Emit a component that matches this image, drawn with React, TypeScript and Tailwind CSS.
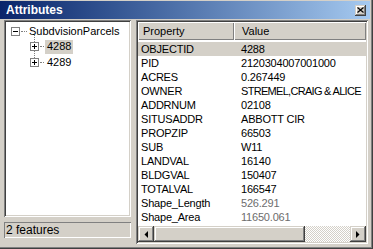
const raised =
  "shadow-[inset_-1px_-1px_0_#404040,inset_1px_1px_0_#d4d0c8,inset_-2px_-2px_0_#808080,inset_2px_2px_0_#ffffff]";
const sunken =
  "shadow-[inset_1px_1px_0_#808080,inset_-1px_-1px_0_#ffffff,inset_2px_2px_0_#404040,inset_-2px_-2px_0_#d4d0c8]";

const rows: { name: string; value: string; dim?: boolean; tight?: boolean }[] = [
  { name: "OBJECTID", value: "4288" },
  { name: "PID", value: "2120304007001000" },
  { name: "ACRES", value: "0.267449" },
  { name: "OWNER", value: "STREMEL,CRAIG & ALICE", tight: true },
  { name: "ADDRNUM", value: "02108" },
  { name: "SITUSADDR", value: "ABBOTT CIR" },
  { name: "PROPZIP", value: "66503" },
  { name: "SUB", value: "W11" },
  { name: "LANDVAL", value: "16140" },
  { name: "BLDGVAL", value: "150407" },
  { name: "TOTALVAL", value: "166547" },
  { name: "Shape_Length", value: "526.291", dim: true },
  { name: "Shape_Area", value: "11650.061", dim: true },
];

function ExpBox({ open }: { open?: boolean }) {
  return (
    <svg width="9" height="9" viewBox="0 0 9 9" className="shrink-0 relative">
      <rect x="0.5" y="0.5" width="8" height="8" fill="#fff" stroke="#808080" />
      <path d="M2 4.5h5" stroke="#000" />
      {!open && <path d="M4.5 2v5" stroke="#000" />}
    </svg>
  );
}

function Arrow({ dir }: { dir: "left" | "right" }) {
  return (
    <svg width="4" height="7" viewBox="0 0 4 7">
      {dir === "left" ? <path d="M4 0v7L0.5 3.5z" fill="#000" /> : <path d="M0 0v7l3.5-3.5z" fill="#000" />}
    </svg>
  );
}

export default function App() {
  return (
    <div
      className="w-[373px] h-[249px] bg-[#d4d0c8] flex flex-col pt-[1px] shadow-[inset_-1px_-1px_0_#404040,inset_-2px_-2px_0_#808080] text-[11px] text-black"
      style={{ fontFamily: '"Liberation Sans", Arial, sans-serif' }}
    >
      {/* title bar */}
      <div className="h-[18px] mr-[3px] flex items-center justify-between bg-gradient-to-r from-[#0a246a] to-[#a6caf0] pl-[6px] pr-[4px]">
        <span className="text-white font-bold text-[12px] leading-none">Attributes</span>
        <button className={`w-[11px] h-[11px] bg-[#d4d0c8] flex items-center justify-center ${raised}`}>
          <svg width="7" height="6" viewBox="0 0 7 6">
            <path d="M0.5 0.5l6 5M6.5 0.5l-6 5" stroke="#000" strokeWidth="1.2" />
          </svg>
        </button>
      </div>

      <div className="flex gap-[5px] pt-[1px] pl-[4px]">
        {/* left column */}
        <div className="w-[127px] flex flex-col gap-[5px]">
          <div className={`h-[197px] bg-white p-[2px] ${sunken}`}>
            <div className="relative pt-[1px] leading-none">
              <span className="absolute left-[28px] top-[11px] h-[25px] border-l border-dotted border-[#808080]" />
              <div className="flex items-center h-[16px] pl-[5px]">
                <ExpBox open />
                <span className="w-[6px] ml-[1px] border-t border-dotted border-[#808080]" />
                <span className="ml-[1px] px-[1px]">SubdvisionParcels</span>
              </div>
              <div className="flex items-center h-[15px] pl-[24px]">
                <ExpBox />
                <span className="w-[4px] ml-[1px] border-t border-dotted border-[#808080]" />
                <span className="ml-[1px] px-[2px] h-[14px] flex items-center bg-[#d4d0c8]">4288</span>
              </div>
              <div className="flex items-center h-[17px] pl-[24px]">
                <ExpBox />
                <span className="w-[4px] ml-[1px] border-t border-dotted border-[#808080]" />
                <span className="ml-[1px] px-[2px]">4289</span>
              </div>
            </div>
          </div>
          <div className="h-[16px] flex items-center pl-[2px] shadow-[inset_1px_1px_0_#808080,inset_-1px_-1px_0_#ffffff] text-[12px]">
            2 features
          </div>
        </div>

        {/* right panel */}
        <div className={`w-[232px] h-[224px] p-[2px] flex flex-col bg-white ${sunken}`}>
          <div className="h-[18px] flex bg-[#d4d0c8] shrink-0">
            <div className="w-[96px] flex items-center pl-[5px] shadow-[inset_1px_1px_0_#ffffff,inset_-1px_-1px_0_#808080]">
              Property
            </div>
            <div className="flex-1 flex items-center pl-[8px] shadow-[inset_1px_1px_0_#ffffff,inset_-1px_-1px_0_#808080]">
              Value
            </div>
          </div>
          <div className="flex-1 pt-[2px] overflow-hidden">
            {rows.map((r, i) => (
              <div
                key={r.name}
                className={`h-[14px] flex items-center leading-none whitespace-nowrap tracking-[-0.2px] ${i === 0 ? "bg-[#d4d0c8]" : ""}`}
              >
                <span className="w-[96px] shrink-0 pl-[3px]">{r.name}</span>
                <span
                  className={`pl-[7px] ${r.dim ? "text-[#6d6d6d]" : ""} ${r.tight ? "tracking-[-0.7px]" : ""}`}
                >
                  {r.value}
                </span>
              </div>
            ))}
          </div>
          <div className="h-[16px] flex shrink-0">
            <div className={`w-[16px] bg-[#d4d0c8] flex items-center justify-center ${raised}`}>
              <Arrow dir="left" />
            </div>
            <div className={`w-[151px] bg-[#d4d0c8] ${raised}`} />
            <div className="flex-1 bg-[repeating-conic-gradient(#d4d0c8_0%_25%,#ffffff_0%_50%)] bg-[length:2px_2px]" />
            <div className={`w-[16px] bg-[#d4d0c8] flex items-center justify-center ${raised}`}>
              <Arrow dir="right" />
            </div>
          </div>
        </div>
      </div>
    </div>
  );
}
